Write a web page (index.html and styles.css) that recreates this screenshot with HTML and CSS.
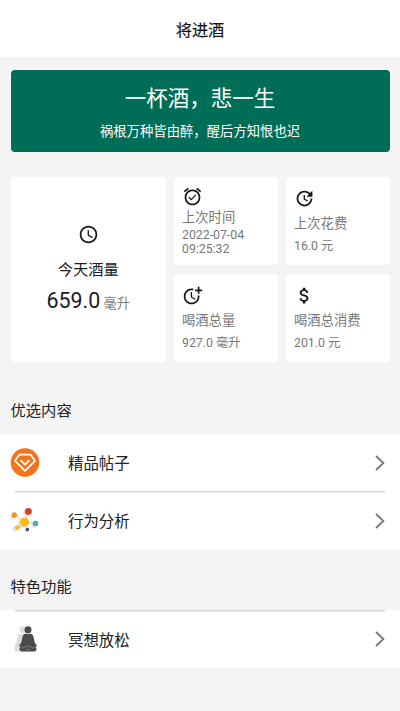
FILE: index.html
```html
<!DOCTYPE html>
<html lang="zh-CN">
<head>
<meta charset="utf-8">
<meta name="viewport" content="width=device-width, initial-scale=1">
<title>将进酒</title>
<link rel="stylesheet" href="styles.css">
</head>
<body>
<header class="header">将进酒</header>
<main>
  <section class="banner">
    <h1 class="banner-title">一杯酒，悲一生</h1>
    <p class="banner-sub">祸根万种皆由醉，醒后方知恨也迟</p>
  </section>
  <section class="stats">
    <article class="card today">
      <svg class="icon" viewBox="0 0 24 24"><path d="M11.99 2C6.47 2 2 6.48 2 12s4.47 10 9.99 10C17.52 22 22 17.52 22 12S17.52 2 11.99 2zM12 20c-4.42 0-8-3.58-8-8s3.58-8 8-8 8 3.58 8 8-3.58 8-8 8zm.5-13H11v6l5.25 3.15.75-1.23-4.5-2.67z"/></svg>
      <div class="today-label">今天酒量</div>
      <div class="today-value">659.0 <span class="unit">毫升</span></div>
    </article>
    <article class="card small timed">
      <svg class="icon" viewBox="0 0 24 24"><path d="M22 5.72l-4.6-3.86-1.29 1.53 4.6 3.86L22 5.72zM7.88 3.39L6.6 1.86 2 5.71l1.29 1.53 4.59-3.85zM12 4c-4.97 0-9 4.03-9 9s4.02 9 9 9c4.97 0 9-4.03 9-9s-4.03-9-9-9zm0 16c-3.87 0-7-3.13-7-7s3.13-7 7-7 7 3.13 7 7-3.13 7-7 7zm-1.46-5.47L8.41 12.4l-1.06 1.06 3.18 3.18 6-6-1.06-1.06-4.93 4.95z"/></svg>
      <div class="label">上次时间</div>
      <div class="value date">2022-07-04<br>09:25:32</div>
    </article>
    <article class="card small">
      <svg class="icon" viewBox="0 0 24 24"><path d="M21 10.12h-6.78l2.74-2.82c-2.73-2.7-7.15-2.8-9.88-.1-2.73 2.71-2.73 7.08 0 9.79s7.15 2.71 9.88 0C18.32 15.65 19 14.08 19 12.1h2c0 1.98-.88 4.55-2.64 6.29-3.51 3.48-9.21 3.48-12.72 0-3.5-3.47-3.53-9.11-.02-12.58s9.14-3.47 12.65 0L21 3v7.12zM12.5 8v4.25l3.5 2.08-.72 1.21L11 13V8h1.5z"/></svg>
      <div class="label">上次花费</div>
      <div class="value">16.0 元</div>
    </article>
    <article class="card small">
      <svg class="icon" viewBox="0 0 24 24"><path d="M10 8v6l4.7 2.9.8-1.2-4-2.4V8zM17.92 12c.05.33.08.66.08 1 0 3.9-3.1 7-7 7s-7-3.1-7-7 3.1-7 7-7c.7 0 1.37.1 2 .29V4.23C12.36 4.08 11.69 4 11 4c-5 0-9 4-9 9s4 9 9 9 9-4 9-9c0-.34-.02-.67-.06-1zM20 5V2h-2v3h-3v2h3v3h2V7h3V5z"/></svg>
      <div class="label">喝酒总量</div>
      <div class="value">927.0 毫升</div>
    </article>
    <article class="card small">
      <svg class="icon" viewBox="0 0 24 24"><path d="M11.8 10.9c-2.27-.59-3-1.2-3-2.15 0-1.09 1.01-1.85 2.7-1.85 1.78 0 2.44.85 2.5 2.1h2.21c-.07-1.72-1.12-3.3-3.21-3.81V3h-3v2.16c-1.94.42-3.5 1.68-3.5 3.61 0 2.31 1.91 3.46 4.7 4.13 2.5.6 3 1.48 3 2.41 0 .69-.49 1.79-2.7 1.79-2.06 0-2.87-.92-2.98-2.1h-2.2c.12 2.19 1.76 3.42 3.68 3.83V21h3v-2.15c1.95-.37 3.5-1.5 3.5-3.55 0-2.84-2.43-3.81-4.7-4.4z"/></svg>
      <div class="label">喝酒总消费</div>
      <div class="value">201.0 元</div>
    </article>
  </section>

  <h2 class="section-title">优选内容</h2>
  <nav class="list">
    <a class="row">
      <svg class="row-icon" viewBox="0 0 30 30"><circle cx="15" cy="14.5" r="14.3" fill="#f4731c"/><path d="M9.6 6.6h10.8l4.6 6.2L15 22.8 5 12.8z" fill="none" stroke="#fff" stroke-width="1.7" stroke-linejoin="round"/><path d="M11 12.6l4 3.9 4-3.9" fill="none" stroke="#fff" stroke-width="1.8" stroke-linecap="round" stroke-linejoin="round"/></svg>
      <span class="row-text">精品帖子</span>
      <svg class="chevron" viewBox="0 0 12 18"><path d="M2 2l7.4 7L2 16"/></svg>
    </a>
    <a class="row divided">
      <svg class="row-icon" viewBox="0 0 30 30"><g fill="#e3e5e8"><circle cx="3" cy="11" r="2.8"/><circle cx="16.5" cy="7" r="3.2"/><circle cx="12.6" cy="18" r="4.6"/><circle cx="5" cy="23" r="2.6"/><circle cx="24" cy="19.2" r="2.6"/><circle cx="16" cy="25" r="1.8"/></g><path d="M14.5 16L4.5 9M14.5 16l4-10.5M14.5 16l11 1.5M14.5 16l-7 6M14.5 16l3 7.5" stroke="#d7dce1" stroke-width="1.4"/><circle cx="14.5" cy="16" r="4.5" fill="#fbbd12"/><circle cx="18.4" cy="5.4" r="3.4" fill="#dc3c1b"/><circle cx="4.3" cy="9" r="2.7" fill="#f2921d"/><circle cx="25.5" cy="17.4" r="2.7" fill="#53a5b9"/><circle cx="7.3" cy="21.6" r="2.4" fill="#fbbd12"/><circle cx="17.4" cy="23.5" r="1.7" fill="#344454"/></svg>
      <span class="row-text">行为分析</span>
      <svg class="chevron" viewBox="0 0 12 18"><path d="M2 2l7.4 7L2 16"/></svg>
    </a>
  </nav>

  <h2 class="section-title second">特色功能</h2>
  <nav class="list">
    <a class="row divided">
      <svg class="row-icon" viewBox="0 0 30 30">
        <defs><g id="sitter"><circle cx="18" cy="5.7" r="3.5"/><path d="M15.9 9.8h4.2c2.1.2 3 1.3 3.5 3.5l1 5 2.1 3c.5.8-.2 1.5-1 1.2l-1.1-.4c1.3 1.1 2.1 2.2 1.9 3.5-.3 1.7-1.8 2-3.6 2h-9.8c-1.8 0-3.3-.3-3.6-2-.2-1.3.6-2.4 1.9-3.5l-1.1.4c-.8.3-1.5-.4-1-1.2l2.1-3 1-5c.5-2.2 1.4-3.3 3.5-3.5z"/></g></defs>
        <use href="#sitter" x="-5" fill="#dedede"/>
        <use href="#sitter" fill="#4b4b4b"/>
        <path d="M12 23.9c2.3-.2 3.8-1.7 6-1.7s3.7 1.5 6 1.7M15.5 26.9c1-1.6 4-1.6 5 0" fill="none" stroke="#999" stroke-width=".7"/>
      </svg>
      <span class="row-text">冥想放松</span>
      <svg class="chevron" viewBox="0 0 12 18"><path d="M2 2l7.4 7L2 16"/></svg>
    </a>
  </nav>
</main>
</body>
</html>
```
FILE: styles.css
```css
* { box-sizing: border-box; }
body {
  margin: 0;
  background: #f4f4f4;
  color: #202020;
  font-family: Roboto, "Noto Sans CJK SC", sans-serif;
}
h1, h2, p { margin: 0; font-weight: 400; }
svg { display: block; flex: none; }

.header {
  height: 57px;
  padding-top: 4px;
  background: #fff;
  color: #111;
  font-size: 16.2px;
  line-height: 54px;
  text-align: center;
  -webkit-text-stroke: .15px #111;
}

.banner {
  height: 82.5px;
  margin: 12.5px 10.5px 0;
  padding-top: 13px;
  border-radius: 4px;
  background: #006d56;
  color: #fff;
  text-align: center;
}
.banner-title { font-size: 21.5px; line-height: 32px; }
.banner-sub { margin-top: 7px; font-size: 13.35px; line-height: 20px; }

.stats {
  display: grid;
  grid-template-columns: 155.5px 104px 103.5px;
  grid-template-rows: 88px 88px;
  gap: 8.5px 8px;
  margin: 25px 10.5px 0;
}
.card { border-radius: 4px; background: #fff; }
.icon { width: 21px; height: 21px; fill: #181818; }

.today {
  grid-row: span 2;
  display: flex;
  flex-direction: column;
  align-items: center;
  padding-top: 47px;
}
.today-label { margin-top: 14px; font-size: 15.3px; line-height: 22px; }
.today-value { margin-top: 5px; font-size: 21.4px; line-height: 30px; white-space: nowrap; }
.unit { margin-left: -2px; color: #808080; font-size: 13.2px; }

.small { padding: 11px 0 0 8px; color: #777; }
.label { margin-top: 5px; font-size: 13.3px; line-height: 20px; white-space: nowrap; }
.value { margin-top: 3px; font-size: 12.3px; line-height: 18px; }
.timed { padding-top: 9px; }
.timed .label { margin-top: 1px; }
.date { margin-top: 0; line-height: 14px; }

.section-title {
  height: 34px;
  margin-top: 38.5px;
  padding-left: 10.5px;
  font-size: 15.3px;
  line-height: 23px;
}
.second { margin-top: 26.5px; height: 33.5px; }
.row {
  display: flex;
  align-items: center;
  height: 57px;
  padding: 0 14px 0 10px;
  background: #fff;
}
.divided {
  height: 58.5px;
  padding-top: 1px;
  background: linear-gradient(#d6d6d6, #d6d6d6) 15px 0 / 370px 1.5px no-repeat, #fff;
}
.row-icon { width: 30px; height: 30px; }
.row-text { flex: 1; margin-left: 28px; padding-top: 3px; font-size: 15.4px; line-height: 24px; }
.chevron { width: 12px; height: 18px; fill: none; stroke: #777; stroke-width: 1.8; }
```
